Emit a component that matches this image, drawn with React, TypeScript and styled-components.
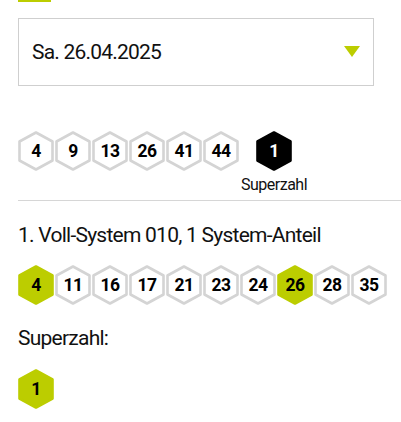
import React from 'react'
import styled, { createGlobalStyle } from 'styled-components'

const GlobalStyle = createGlobalStyle`
  html, body {
    margin: 0;
    padding: 0;
    background: #fff;
    font-family: Roboto, 'Liberation Sans', sans-serif;
    color: #111;
  }
`

const GREEN = '#bccd00'

type Variant = 'plain' | 'hit' | 'super'

const Hex = ({ value, variant = 'plain' }: { value: number; variant?: Variant }) => {
  const fill = variant === 'hit' ? GREEN : variant === 'super' ? '#000' : '#fff'
  const stroke = variant === 'plain' ? '#d4d4d4' : fill
  return (
    <HexBox>
      <svg width="36" height="40" viewBox="0 0 36 40">
        <polygon
          points="18,1.5 34.5,10.5 34.5,29.5 18,38.5 1.5,29.5 1.5,10.5"
          fill={fill}
          stroke={stroke}
          strokeWidth="2.6"
          strokeLinejoin="round"
        />
      </svg>
      <HexNum light={variant === 'super'}>{value}</HexNum>
    </HexBox>
  )
}

const App = () => {
  const drawn = [4, 9, 13, 26, 41, 44]
  const system = [4, 11, 16, 17, 21, 23, 24, 26, 28, 35]

  return (
    <Page>
      <GlobalStyle />
      <TabMark />
      <Select>
        <SelectText>Sa. 26.04.2025</SelectText>
        <svg width="16" height="12" viewBox="0 0 16 12">
          <polygon points="0,0 16,0 8,11" fill={GREEN} />
        </svg>
      </Select>

      <DrawRow>
        <HexRow>
          {drawn.map(n => (
            <Hex key={n} value={n} />
          ))}
        </HexRow>
        <SuperCol>
          <Hex value={1} variant="super" />
          <SuperLabel>Superzahl</SuperLabel>
        </SuperCol>
      </DrawRow>

      <Divider />

      <Section>
        <Heading top={22} bottom={18}>1. Voll-System 010, 1 System-Anteil</Heading>
        <HexRow>
          {system.map(n => (
            <Hex key={n} value={n} variant={drawn.includes(n) ? 'hit' : 'plain'} />
          ))}
        </HexRow>
        <Heading top={21} bottom={19}>Superzahl:</Heading>
        <HexRow>
          <Hex value={1} variant="hit" />
        </HexRow>
      </Section>
    </Page>
  )
}

export default App

const Page = styled.div`
  width: 401px;
  height: 422px;
  overflow: hidden;
`

const TabMark = styled.div`
  width: 33px;
  height: 2px;
  margin-left: 18px;
  background: ${GREEN};
`

const Select = styled.div`
  margin: 16px 27px 0 18px;
  height: 66px;
  border: 1px solid #cfcfcf;
  display: flex;
  align-items: center;
  justify-content: space-between;
  padding: 0 13px 0 13px;
`

const SelectText = styled.span`
  font-size: 21px;
  letter-spacing: -0.8px;
  color: #111;
`

const DrawRow = styled.div`
  display: flex;
  align-items: flex-start;
  margin: 45px 0 0 18px;
`

const HexRow = styled.div`
  display: flex;
  gap: 1px;
`

const HexBox = styled.div`
  position: relative;
  width: 36px;
  height: 40px;
  display: flex;
  align-items: center;
  justify-content: center;

  svg {
    position: absolute;
    inset: 0;
  }
`

const HexNum = styled.span<{ light: boolean }>`
  position: relative;
  font-weight: 700;
  font-size: 17.5px;
  letter-spacing: -0.6px;
  color: ${p => (p.light ? '#fff' : '#000')};
`

const SuperCol = styled.div`
  display: flex;
  flex-direction: column;
  align-items: center;
  margin-left: 2px;
`

const SuperLabel = styled.span`
  font-size: 16px;
  letter-spacing: -0.5px;
  margin-top: 4px;
  color: #111;
`

const Divider = styled.div`
  height: 1px;
  background: #d6d6d6;
  margin: 6px 0 0 18px;
`

const Section = styled.div`
  padding: 0 0 0 18px;
`

const Heading = styled.div<{ top: number; bottom: number }>`
  font-size: 21px;
  line-height: 24px;
  letter-spacing: -0.75px;
  margin: ${p => p.top}px 0 ${p => p.bottom}px;
  color: #111;
`
